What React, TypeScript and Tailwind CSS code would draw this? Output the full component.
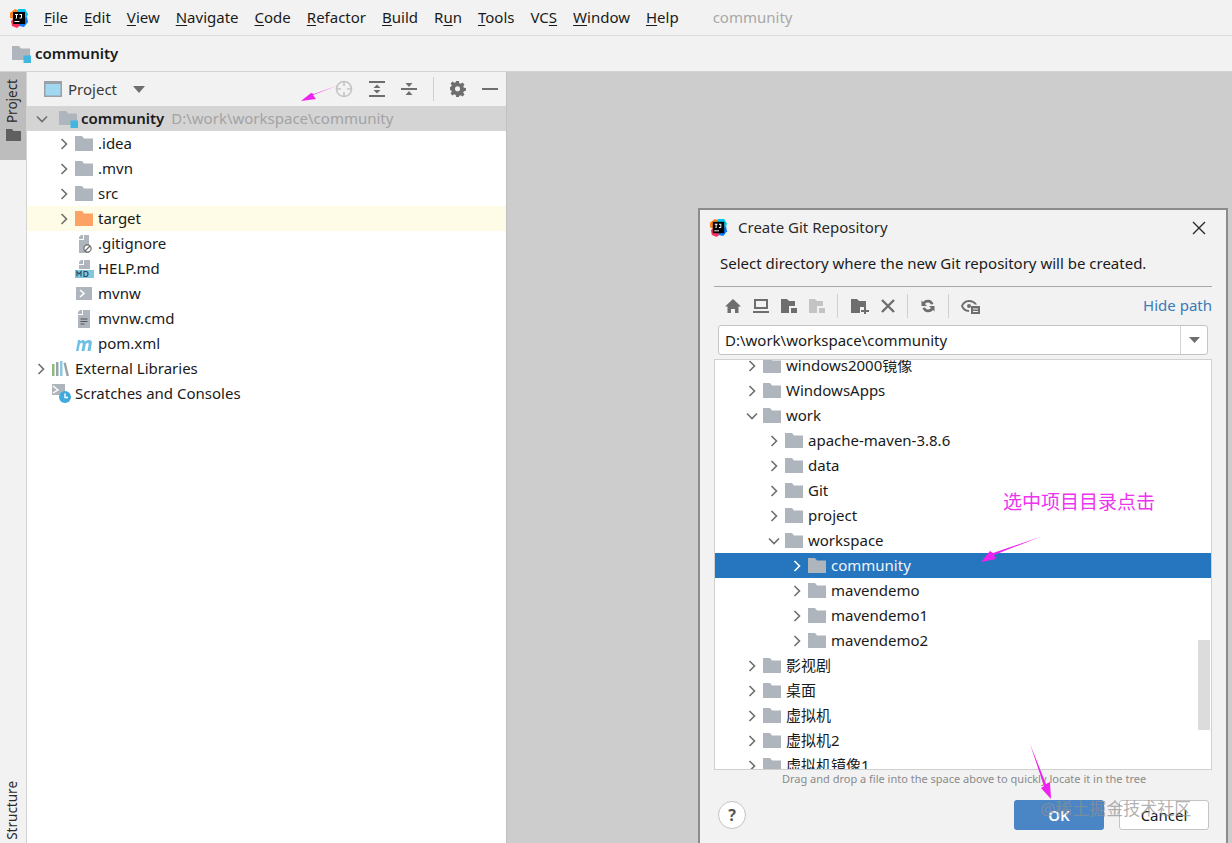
import React from "react";

const Folder = ({ c = "#afb5bc", size = 18 }: { c?: string; size?: number }) => (
  <svg width={size} height={size * 0.89} viewBox="0 0 18 16" className="shrink-0">
    <path d="M0 1h7l2 2.5h9V16H0z" fill={c} />
  </svg>
);

const ProjectFolder = () => (
  <svg width="19" height="18" viewBox="0 0 19 18" className="shrink-0">
    <path d="M0 1h7l2 2.5h9V15H0z" fill="#afb5bc" />
    <rect x="11.5" y="10.5" width="7.5" height="7.5" fill="#40b6e0" />
  </svg>
);

const Chevron = ({ open, c = "#6e6e6e" }: { open?: boolean; c?: string }) => (
  <svg width="12" height="12" viewBox="0 0 12 12" className="shrink-0">
    <path d={open ? "M1 3.5l5 5 5-5" : "M3.5 1l5 5-5 5"} fill="none" stroke={c} strokeWidth="1.6" />
  </svg>
);

const Logo = ({ size = 20 }: { size?: number }) => (
  <svg width={size} height={size} viewBox="0 0 20 20" className="shrink-0">
    <path d="M1 5l5-4 5 2-6 8-4-1z" fill="#fc801d" />
    <path d="M2 13l5-5 6 8-5 4-5-2z" fill="#fe315d" />
    <path d="M9 1h7l3 5-2 5-8-4z" fill="#07c3f2" />
    <path d="M11 13l7-4 1 5-4 5-5-1z" fill="#087cfa" />
    <rect x="4" y="4" width="12" height="12" fill="#000" />
    <rect x="5.5" y="13" width="5" height="1" fill="#fff" />
    <path d="M6 6h3v1H8v3.5H6.5V10h.5V7H6zM10.5 6H13v3.5q0 1-1.2 1h-1.3v-1H12V7h-1.5z" fill="#fff" />
  </svg>
);

const GitIgnoreIcon = () => (
  <svg width="18" height="18" viewBox="0 0 18 18" className="shrink-0">
    <path d="M6 0h2v4H4v-2zM9 0h5v18H4V5h5z" fill="#afb5bc" />
    <circle cx="12.5" cy="13.5" r="3.6" fill="#fff" stroke="#6e6e6e" strokeWidth="1.2" />
    <path d="M10 16l5-5" stroke="#6e6e6e" strokeWidth="1.2" />
  </svg>
);
const MdIcon = () => (
  <svg width="19" height="18" viewBox="0 0 19 18" className="shrink-0">
    <path d="M6 0h2v4H4V2zM9 0h6v9H4V5h5z" fill="#afb5bc" />
    <rect x="0" y="10" width="19" height="8" fill="#7fc6e0" />
    <path d="M2 16.500v-5l2 2.500 2-2.500v5M9 11.500v5h2q2 0 2-2.500t-2-2.500z" fill="none" stroke="#2b4a5a" strokeWidth="1.1" />
  </svg>
);
const ShellIcon = () => (
  <svg width="16" height="13" viewBox="0 0 16 13" className="shrink-0">
    <rect width="16" height="13" fill="#afb5bc" />
    <path d="M4 3l4 3.500-4 3.500" fill="none" stroke="#fff" strokeWidth="1.6" />
  </svg>
);
const CmdIcon = () => (
  <svg width="14" height="18" viewBox="0 0 14 18" className="shrink-0">
    <path d="M3 0h2v4H1V2zM6 0h7v18H1V5h5z" fill="#afb5bc" />
    <path d="M3.500 9h7M3.500 11.500h7M3.500 14h4" stroke="#555" strokeWidth="1" />
  </svg>
);
const MavenIcon = () => (
  <svg width="19" height="14" viewBox="0 0 19 14" className="shrink-0">
    <path d="M1 14L3 3h2.500l-.3 1.500Q7 2.500 8.500 3t1.500 1.500Q12 2.500 14.500 3q3 .6 2.300 3.500L15.500 14h-3l1.200-6.500q.2-1.800-1-1.800t-2 1.800L9.500 14h-3l1.200-6.500q.2-1.800-1-1.800t-2 1.800L3.500 14z" fill="#6fc0e6" />
  </svg>
);
const LibIcon = () => (
  <svg width="18" height="15" viewBox="0 0 18 15" className="shrink-0">
    <rect x="0" y="3" width="2.500" height="12" fill="#8fb97a" />
    <rect x="4" y="1" width="2.500" height="14" fill="#9aa3aa" />
    <rect x="8" y="0" width="2.500" height="15" fill="#8fc6e0" />
    <path d="M11.500 2l2.300-.5L17 15h-2.500z" fill="#9aa3aa" />
  </svg>
);
const ScratchIcon = () => (
  <svg width="20" height="20" viewBox="0 0 20 20" className="shrink-0">
    <rect x="0" y="0" width="13" height="11" fill="#afb5bc" />
    <path d="M1 2l5 4-5 3" fill="none" stroke="#fff" strokeWidth="1.400" />
    <circle cx="13" cy="13" r="6" fill="#40a9de" />
    <path d="M13 9.500V13.500h3" fill="none" stroke="#fff" strokeWidth="1.400" />
  </svg>
);

const gray = "#6e6e6e";
const Tool = ({ children, w = 16 }: { children: React.ReactNode; w?: number }) => (
  <svg width={w} height="16" viewBox={`0 0 ${w} 16`} className="shrink-0" fill={gray}>
    {children}
  </svg>
);

const Menu = ({ u, pre = "", post }: { u: string; pre?: string; post: string }) => (
  <span>
    {pre}
    <span className="underline underline-offset-2">{u}</span>
    {post}
  </span>
);

const Row = ({
  pad,
  arrow,
  icon,
  children,
  className = "",
}: {
  pad: string;
  arrow?: "open" | "closed";
  icon: React.ReactNode;
  children: React.ReactNode;
  className?: string;
}) => (
  <div className={`h-[25px] flex items-center ${pad} ${className}`}>
    <div className="w-[12px] flex justify-center shrink-0">
      {arrow && <Chevron open={arrow === "open"} />}
    </div>
    <div className="w-[24px] ml-[5px] mr-[-1px] flex items-center justify-start shrink-0">{icon}</div>
    <div className="whitespace-nowrap">{children}</div>
  </div>
);

const TreeRow = ({ d, open, sel, name }: { d: 0 | 1 | 2; open?: boolean; sel?: boolean; name: string }) => {
  const pad = d === 0 ? "pl-[31px]" : d === 1 ? "pl-[53px]" : "pl-[76px]";
  return (
    <div className={`h-[25px] flex items-center ${pad} ${sel ? "bg-[#2675bf] text-[#f0f4f8]" : "text-[#1a1a1a]"}`}>
      <div className="w-[12px] flex justify-center shrink-0">
        <Chevron open={open} c={sel ? "#ffffff" : "#6e6e6e"} />
      </div>
      <div className="ml-[5px] w-[23px] shrink-0">
        <Folder c="#afb5bc" />
      </div>
      <div className="whitespace-nowrap">{name}</div>
    </div>
  );
};

const Sep = () => <div className="w-px h-[24px] bg-[#d0d0d0] shrink-0" />;

export default function App() {
  return (
    <div
      className="relative w-[1232px] h-[843px] overflow-hidden bg-[#f2f2f2] text-[15px] text-[#1a1a1a] flex flex-col"
      style={{ fontFamily: '"Noto Sans", "Noto Sans CJK SC", sans-serif' }}
    >
      {/* Menu bar */}
      <div className="h-[36px] shrink-0 flex items-center border-b border-[#dcdcdc] pl-[9px]">
        <Logo />
        <div className="ml-[15px] flex gap-[16px] leading-none">
          <Menu u="F" post="ile" />
          <Menu u="E" post="dit" />
          <Menu u="V" post="iew" />
          <Menu u="N" post="avigate" />
          <Menu u="C" post="ode" />
          <Menu u="R" post="efactor" />
          <Menu u="B" post="uild" />
          <Menu pre="R" u="u" post="n" />
          <Menu u="T" post="ools" />
          <Menu pre="VC" u="S" post="" />
          <Menu u="W" post="indow" />
          <Menu u="H" post="elp" />
        </div>
        <div className="ml-[34px] text-[#a8a8a8] leading-none">community</div>
      </div>

      {/* Nav bar */}
      <div className="h-[36px] shrink-0 flex items-center gap-[4px] pl-[12px] border-b border-[#d4d4d4] font-semibold">
        <ProjectFolder />
        <span>community</span>
      </div>

      {/* Main */}
      <div className="flex-1 flex min-h-0">
        {/* Left stripe */}
        <div className="w-[27px] shrink-0 flex flex-col justify-between border-r border-[#d4d4d4] bg-[#f2f2f2]">
          <div className="h-[88px] bg-[#bdbdbd] flex flex-col items-center pt-[7px] gap-[6px]">
            <span className="[writing-mode:vertical-rl] rotate-180 text-[13.500px] text-[#2a2a2a] leading-none">Project</span>
            <svg width="15" height="12" viewBox="0 0 15 12" className="shrink-0">
              <path d="M0 0h6l1.500 2H15v10H0z" fill="#5f5f5f" />
            </svg>
          </div>
          <div className="flex justify-center pb-[3px]">
            <span className="[writing-mode:vertical-rl] rotate-180 text-[13.500px] text-[#2a2a2a] leading-none">Structure</span>
          </div>
        </div>

        {/* Project panel */}
        <div className="w-[479px] shrink-0 bg-white flex flex-col">
          <div className="h-[34px] shrink-0 bg-[#f2f2f2] flex items-center pl-[17px] pr-[8px]">
            <svg width="18" height="16" viewBox="0 0 18 16" className="shrink-0">
              <rect width="18" height="16" fill="#9aa0a6" />
              <rect x="1.500" y="3" width="15" height="11.500" fill="#9fd8ef" />
            </svg>
            <span className="ml-[6px] text-[#3a3a3a]">Project</span>
            <svg width="12" height="7" viewBox="0 0 12 7" className="ml-[16px] shrink-0">
              <path d="M0 0h12L6 7z" fill={gray} />
            </svg>
            <div className="ml-auto flex items-center gap-[16px]">
              <svg width="18" height="18" viewBox="0 0 18 18" className="shrink-0">
                <circle cx="9" cy="9" r="7.500" fill="none" stroke="#c4c4c4" strokeWidth="1.600" />
                <path d="M9 1v5M9 12v5M1 9h5M12 9h5" stroke="#c4c4c4" strokeWidth="1.600" />
              </svg>
              <Tool>
                <path d="M0 0h16v2H0zM0 14h16v2H0zM8 3.500l3.500 3.500h-7zM8 12.500L4.500 9h7z" />
              </Tool>
              <Tool>
                <path d="M0 7h16v2H0zM8 6L4.500 2h7zM8 10l3.500 4h-7z" />
              </Tool>
              <div className="w-px h-[24px] bg-[#d0d0d0]" />
              <Tool>
                <path
                  fillRule="evenodd"
                  d="M6.500 0h3l.4 2.300 1.500.7 2-1.300 2 2-1.300 2 .7 1.500L17 7.500v3l-2.200.4-.7 1.500 1.300 2-2 2-2-1.300-1.500.7L9.500 17h-3l-.4-2.200-1.500-.7-2 1.300-2-2 1.300-2-.7-1.500L-1 9.500v-3l2.200-.4.7-1.500-1.300-2 2-2 2 1.300 1.500-.7zM8 5.500a2.700 2.700 0 100 5.400 2.700 2.700 0 000-5.400z"
                  transform="scale(.94)"
                />
              </Tool>
              <Tool>
                <path d="M0 7h16v2H0z" />
              </Tool>
            </div>
          </div>

          <div className="h-[25px] flex items-center pl-[9px] bg-[#d4d4d4]">
            <div className="w-[12px] flex justify-center shrink-0">
              <Chevron open />
            </div>
            <div className="ml-[11px] w-[22px] shrink-0">
              <ProjectFolder />
            </div>
            <span className="font-semibold">community</span>
            <span className="ml-[7px] text-[#a3a3a3]">D:\work\workspace\community</span>
          </div>
          <Row pad="pl-[31px]" arrow="closed" icon={<Folder />}>.idea</Row>
          <Row pad="pl-[31px]" arrow="closed" icon={<Folder />}>.mvn</Row>
          <Row pad="pl-[31px]" arrow="closed" icon={<Folder />}>src</Row>
          <Row pad="pl-[31px]" arrow="closed" icon={<Folder c="#fca264" />} className="bg-[#fefbe6]">target</Row>
          <Row pad="pl-[31px]" icon={<GitIgnoreIcon />}>.gitignore</Row>
          <Row pad="pl-[31px]" icon={<MdIcon />}>HELP.md</Row>
          <Row pad="pl-[31px]" icon={<span className="ml-[1px] block"><ShellIcon /></span>}>mvnw</Row>
          <Row pad="pl-[31px]" icon={<span className="ml-[2px] block"><CmdIcon /></span>}>mvnw.cmd</Row>
          <Row pad="pl-[31px]" icon={<MavenIcon />}>pom.xml</Row>
          <Row pad="pl-[8px]" arrow="closed" icon={<LibIcon />}>External Libraries</Row>
          <Row pad="pl-[8px]" icon={<ScratchIcon />}>Scratches and Consoles</Row>
        </div>

        {/* Empty editor */}
        <div className="flex-1 bg-[#cdcdcd] border-l border-[#c0c0c0]" />
      </div>

      {/* Dialog */}
      <div className="absolute left-[698px] top-[208px] w-[530px] h-[640px] bg-[#f2f2f2] border-2 border-[#8c8c8c] flex flex-col">
        <div className="h-[33px] mt-[1px] shrink-0 flex items-center pl-[9px] pr-[20px]">
          <Logo size={19} />
          <span className="ml-[10px] text-[#2a2a2a]">Create Git Repository</span>
          <svg width="14" height="14" viewBox="0 0 14 14" className="ml-auto shrink-0">
            <path d="M1 1l12 12M13 1L1 13" stroke="#2a2a2a" strokeWidth="1.400" />
          </svg>
        </div>
        <div className="mt-[4px] h-[30px] shrink-0 pl-[20px] flex items-center text-[#1a1a1a]">
          Select directory where the new Git repository will be created.
        </div>

        <div className="mx-[14px] mt-[8px] border-t border-[#a8a8a8] h-[38px] shrink-0 flex items-center pl-[11px] gap-[12px]">
          <Tool>
            <path d="M8 1L0 8.500h2.500V15H6v-4h4v4h3.500V8.500H16z" />
          </Tool>
          <Tool>
            <path fillRule="evenodd" d="M1 1h14v10H1zM3 3v6h10V3zM0 13h16v2H0z" />
          </Tool>
          <Tool>
            <path d="M0 1h6l2 2h6v5H8v7H0zM10 10h6v5h-6z" />
          </Tool>
          <svg width="16" height="16" viewBox="0 0 16 16" className="shrink-0" fill="#c4c4c4">
            <path d="M0 1h6l2 2h6v5H8v7H0zM10 10h6v5h-6z" />
          </svg>
          <Sep />
          <span className="ml-[1px]">
            <Tool w={18}>
              <path d="M0 1h6l2 2h7v6H9v6H0zM13 9h2v3h3v2h-3v2h-2v-2h-3v-2h3z" />
            </Tool>
          </span>
          <Tool w={14}>
            <path d="M1 1l12 12M13 1L1 13" fill="none" stroke={gray} strokeWidth="2.400" transform="translate(0 1)" />
          </Tool>
          <Sep />
          <Tool>
            <path d="M13.500 6A6 6 0 003 4L1.500 2.500V8h5.500L5 6a3.500 3.500 0 016 .5zM2.500 10A6 6 0 0013 12l1.500 1.500V8H9l2 2a3.500 3.500 0 01-6-.5z" />
          </Tool>
          <Sep />
          <Tool w={20}>
            <path d="M8 2C4 2 1 5 0 8c1 3 4 6 8 6v-2c-3 0-5-2-6-4 1-2 3-4 6-4s4.500 1 5.500 2.500H16C14.500 3.500 11.500 2 8 2z" />
            <circle cx="8" cy="8" r="2" />
            <path fillRule="evenodd" d="M10 8h9v9h-9zM12 10.500v1h5v-1zM12 13v1h5v-1z" />
          </Tool>
          <span className="ml-auto text-[#3c7ab8] leading-none">Hide path</span>
        </div>

        <div className="mx-[18px] mt-[1px] h-[30px] shrink-0 bg-white border border-[#c4c4c4] rounded-[3px] flex items-center">
          <span className="pl-[6px] flex-1">D:\work\workspace\community</span>
          <div className="w-[27px] h-full border-l border-[#d4d4d4] flex items-center justify-center">
            <svg width="11" height="6" viewBox="0 0 11 6">
              <path d="M0 0h11L5.500 6z" fill={gray} />
            </svg>
          </div>
        </div>

        <div className="relative mx-[14px] mt-[4px] h-[411px] shrink-0 bg-white border border-[#d0d0d0] overflow-hidden">
          <div className="-mt-[7px] text-[#1a1a1a]">
            <TreeRow d={0} name="windows2000镜像" />
            <TreeRow d={0} name="WindowsApps" />
            <TreeRow d={0} open name="work" />
            <TreeRow d={1} name="apache-maven-3.8.6" />
            <TreeRow d={1} name="data" />
            <TreeRow d={1} name="Git" />
            <TreeRow d={1} name="project" />
            <TreeRow d={1} open name="workspace" />
            <TreeRow d={2} sel name="community" />
            <TreeRow d={2} name="mavendemo" />
            <TreeRow d={2} name="mavendemo1" />
            <TreeRow d={2} name="mavendemo2" />
            <TreeRow d={0} name="影视剧" />
            <TreeRow d={0} name="桌面" />
            <TreeRow d={0} name="虚拟机" />
            <TreeRow d={0} name="虚拟机2" />
            <TreeRow d={0} name="虚拟机镜像1" />
          </div>
          <div className="absolute right-[1px] top-[280px] w-[12px] h-[90px] bg-[#dcdcdc]" />
        </div>

        <div className="h-[19px] shrink-0 flex items-center justify-center text-[11px] text-[#8a8a8a] pl-[2px]">
          Drag and drop a file into the space above to quickly locate it in the tree
        </div>

        <div className="mt-[11px] h-[30px] shrink-0 flex items-center pl-[18px] pr-[17px]">
          <div className="w-[28px] h-[28px] rounded-full border border-[#c4c4c4] bg-white flex items-center justify-center font-bold text-[16px] text-[#555]">
            ?
          </div>
          <div className="ml-auto w-[90px] h-[30px] rounded-[3px] bg-[#4a86c6] text-white font-semibold flex items-center justify-center">
            OK
          </div>
          <div className="ml-[15px] w-[90px] h-[30px] rounded-[3px] bg-white border border-[#c4c4c4] flex items-center justify-center text-[#1a1a1a]">
            Cancel
          </div>
        </div>
      </div>

      {/* Annotations */}
      <svg className="absolute left-0 top-0 pointer-events-none" width="1232" height="843" viewBox="0 0 1232 843">
        <path d="M339 85L313 95 316 99 301 101 311 93 314 94z" fill="#ee22ee" />
        <path d="M1040 537L994 555 996 559 981 562 990 551 993 553z" fill="#ee22ee" />
        <path d="M1030 744L1046 784 1050 782 1051 799 1041 788 1044 786z" fill="#ee22ee" />
      </svg>
      <div className="absolute left-[1003px] top-[489px] text-[19px] leading-[26px] text-[#ee33ee] whitespace-nowrap">
        选中项目目录点击
      </div>
      <div className="absolute left-[1040px] top-[798px] text-[17px] leading-[22px] text-[#8f8f8f]/70 whitespace-nowrap">
        @稀土掘金技术社区
      </div>
    </div>
  );
}
